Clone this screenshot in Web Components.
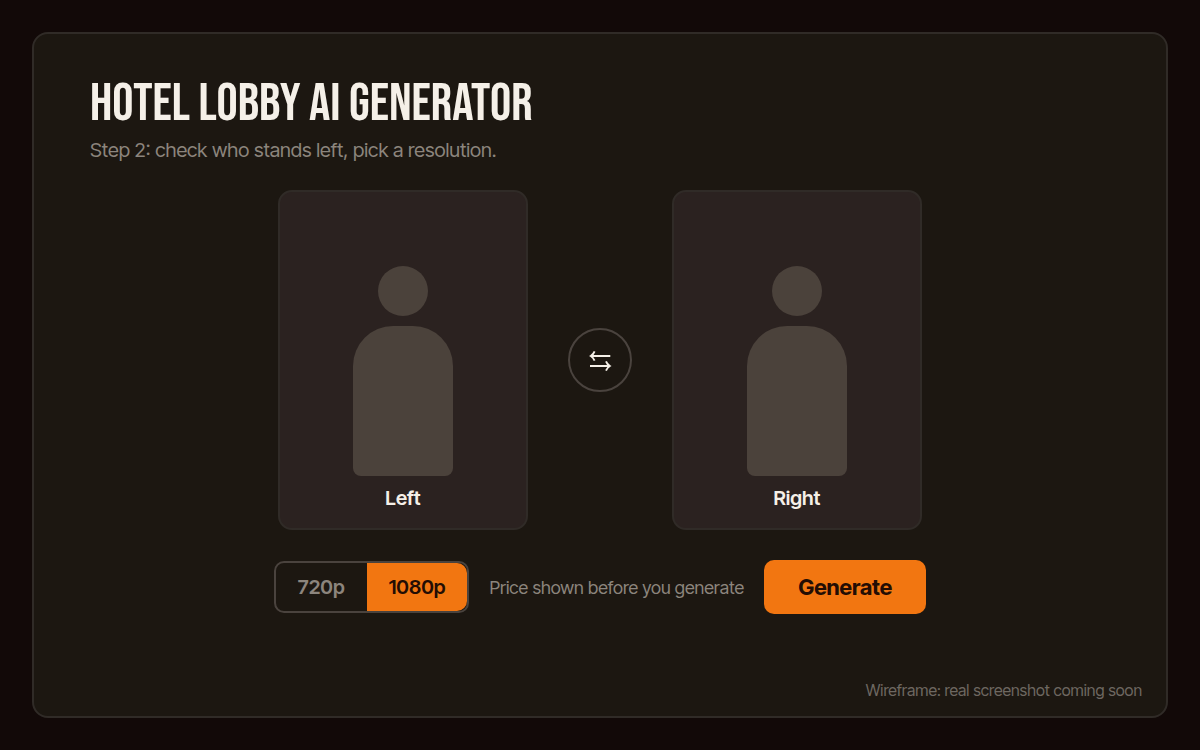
<!DOCTYPE html>
<html lang="en">
<head>
<meta charset="utf-8">
<meta name="viewport" content="width=device-width, initial-scale=1">
<title>Hotel Lobby AI Generator</title>
<style>
  :root {
    --page: #120908;
    --panel: #1c1711;
    --card: #2b2220;
    --line: #302b27;
    --line-strong: #4a433e;
    --figure: #4b423b;
    --text: #f5f0e8;
    --muted: #8c857d;
    --faint: #6e6861;
    --accent: #f27611;
    --on-accent: #230d04;
  }
  body {
    margin: 0;
    background: var(--page);
    color: var(--text);
    font-family: "Inter Tight", Inter, "Liberation Sans", sans-serif;
  }
</style>
</head>
<body>
<generator-panel>
  <panel-heading slot="heading">
    <span slot="title">Hotel Lobby AI Generator</span>
    <span slot="step">Step 2: check who stands left, pick a resolution.</span>
  </panel-heading>
  <person-card>Left</person-card>
  <swap-button></swap-button>
  <person-card>Right</person-card>
  <resolution-picker slot="controls"></resolution-picker>
  <price-note slot="controls">Price shown before you generate</price-note>
  <generate-button slot="controls">Generate</generate-button>
  <span slot="note">Wireframe: real screenshot coming soon</span>
</generator-panel>

<script>
  const define = (name, html) => customElements.define(name, class extends HTMLElement {
    constructor() {
      super();
      this.attachShadow({ mode: "open" }).innerHTML = html;
    }
  });

  define("generator-panel", `
    <style>
      :host { display: flex; box-sizing: border-box; min-height: 100vh; padding: 32px; }
      main {
        flex: 1; display: flex; flex-direction: column;
        border: 2px solid var(--line); border-radius: 16px; background: var(--panel);
        padding: 40px 24px 16px 56px;
      }
      .people, .controls {
        display: flex; flex-wrap: wrap; align-items: center; justify-content: center;
        margin-right: 32px;
      }
      .people { gap: 40px; margin-top: 28px; }
      .controls { gap: 20px; margin-top: 30px; }
      footer { margin-top: auto; text-align: right; font-size: 16px; line-height: 20px; color: var(--faint); }
    </style>
    <main>
      <slot name="heading"></slot>
      <div class="people"><slot></slot></div>
      <div class="controls"><slot name="controls"></slot></div>
      <footer><slot name="note"></slot></footer>
    </main>`);

  define("panel-heading", `
    <style>
      :host { display: block; }
      h1 {
        margin: 0; text-transform: uppercase;
        font: 400 53px/60px "Bebas Neue", "Roboto Condensed", "Liberation Sans Narrow", "Liberation Sans", sans-serif;
      }
      p { margin: 4px 0 0; font-size: 20px; line-height: 24px; color: var(--muted); }
    </style>
    <h1><slot name="title"></slot></h1>
    <p><slot name="step"></slot></p>`);

  define("person-card", `
    <style>
      :host {
        display: flex; flex-direction: column; align-items: center; justify-content: flex-end;
        box-sizing: border-box; width: 250px; height: 340px; padding-bottom: 18px;
        border: 2px solid var(--line); border-radius: 14px; background: var(--card);
      }
      .head { width: 50px; height: 50px; border-radius: 50%; background: var(--figure); }
      .body { width: 100px; height: 150px; margin: 10px 0; border-radius: 40px 40px 8px 8px; background: var(--figure); }
      .name { font-size: 20px; line-height: 24px; font-weight: 600; }
    </style>
    <div class="head"></div>
    <div class="body"></div>
    <div class="name"><slot></slot></div>`);

  define("swap-button", `
    <style>
      :host { display: block; }
      button {
        display: grid; place-items: center; box-sizing: border-box; width: 64px; height: 64px; padding: 0;
        border: 2px solid var(--line-strong); border-radius: 50%; background: none; color: var(--text);
      }
      svg { display: block; }
    </style>
    <button type="button" aria-label="Swap left and right">
      <svg width="24" height="24" viewBox="0 0 24 24" fill="none" stroke="currentColor" stroke-width="1.9">
        <path d="M22.300 8H3M6.600 3.400Q5.400 6.300 2.800 8Q5.400 9.700 6.600 12.600M2 18H21.500M18 13.400Q19.200 16.300 21.800 18Q19.200 19.700 18 22.600"/>
      </svg>
    </button>`);

  define("resolution-picker", `
    <style>
      :host { display: block; }
      fieldset {
        display: flex; margin: 0; padding: 0; min-width: 0; overflow: hidden;
        border: 2px solid var(--line-strong); border-radius: 10px;
      }
      label { position: relative; display: block; }
      input { position: absolute; inset: 0; margin: 0; opacity: 0; }
      span { display: block; padding: 12px 22px; font-size: 20px; line-height: 24px; font-weight: 600; color: var(--muted); }
      input:checked + span { background: var(--accent); color: var(--on-accent); }
    </style>
    <fieldset aria-label="Resolution">
      <label><input type="radio" name="resolution" value="720"><span>720p</span></label>
      <label><input type="radio" name="resolution" value="1080" checked><span>1080p</span></label>
    </fieldset>`);

  define("price-note", `
    <style>:host { display: block; font-size: 18px; line-height: normal; color: var(--muted); }</style>
    <slot></slot>`);

  define("generate-button", `
    <style>
      :host { display: block; }
      button {
        display: block; margin: 0; padding: 13px 34px; border: 0; border-radius: 10px;
        background: var(--accent); color: var(--on-accent);
        font-family: inherit; font-size: 22px; line-height: 28px; font-weight: 700;
      }
    </style>
    <button type="button"><slot></slot></button>`);
</script>
</body>
</html>
